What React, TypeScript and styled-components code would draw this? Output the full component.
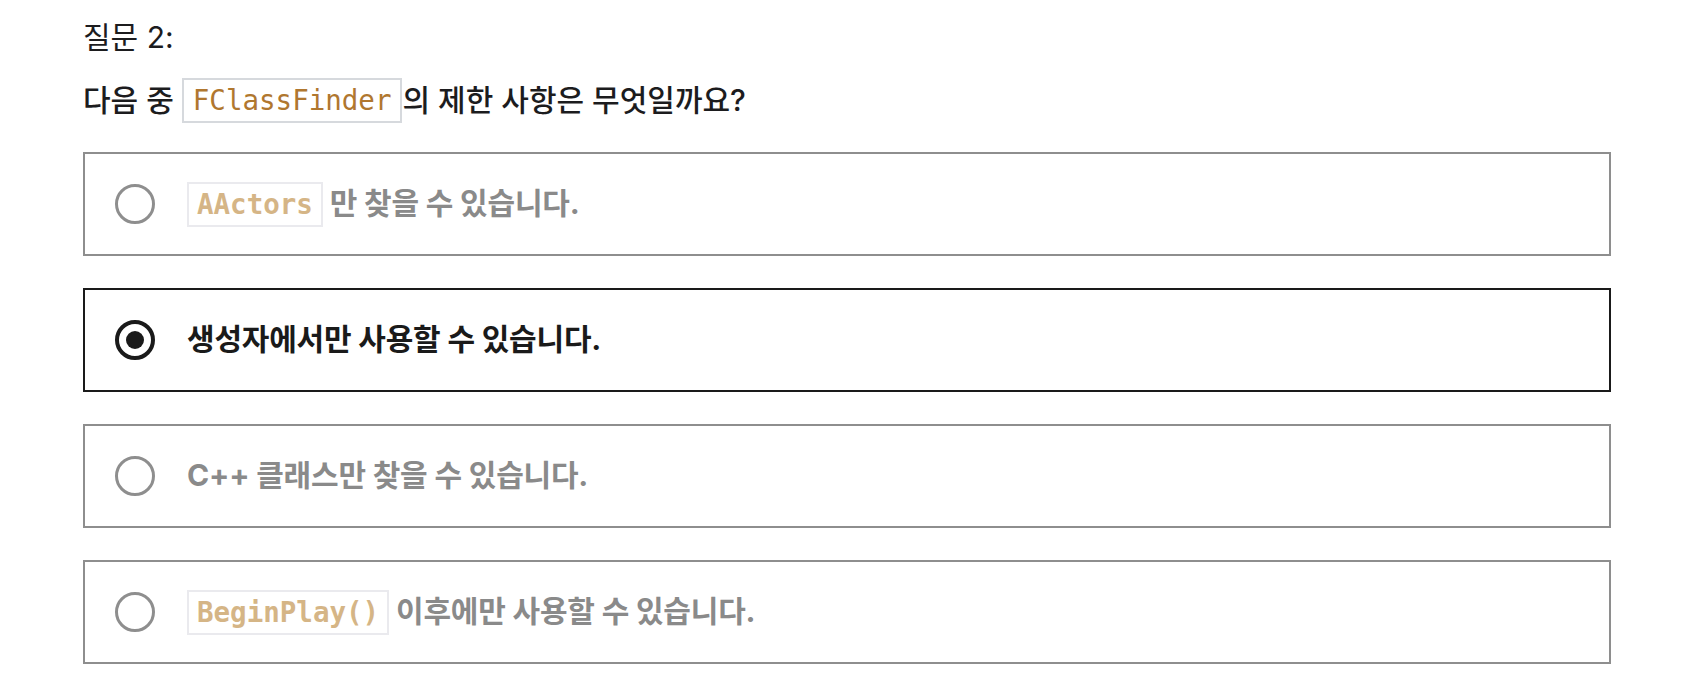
import React from "react";
import styled, { createGlobalStyle } from "styled-components";

const GlobalStyle = createGlobalStyle`
  body {
    margin: 0;
    background: #ffffff;
    font-family: Inter, "Noto Sans CJK KR", sans-serif;
    color: #1c1c1e;
  }
`;

type Part = { code?: string; text: string };

const options: { id: string; parts: Part[] }[] = [
  { id: "a", parts: [{ code: "AActors", text: " 만 찾을 수 있습니다." }] },
  { id: "b", parts: [{ text: "생성자에서만 사용할 수 있습니다." }] },
  { id: "c", parts: [{ text: "C++ 클래스만 찾을 수 있습니다." }] },
  { id: "d", parts: [{ code: "BeginPlay()", text: " 이후에만 사용할 수 있습니다." }] },
];

const QuizApp = () => {
  const [selected, setSelected] = React.useState<string>("b");

  return (
    <Page>
      <GlobalStyle />
      <Title>질문 2:</Title>
      <Question>
        <Label $lift={4}>다음 중 </Label>
        <Code>FClassFinder</Code>
        <Label $lift={4}>의 제한 사항은 무엇일까요?</Label>
      </Question>
      <OptionList>
        {options.map((item) => {
          const active = selected === item.id;
          return (
            <Option
              key={item.id}
              $active={active}
              onClick={() => setSelected(item.id)}
            >
              <Radio $active={active} />
              <OptionText $active={active}>
                {item.parts.map((part, index) => (
                  <React.Fragment key={index}>
                    {part.code ? <OptionCode>{part.code}</OptionCode> : null}
                    <Label $lift={7}>{part.text}</Label>
                  </React.Fragment>
                ))}
              </OptionText>
            </Option>
          );
        })}
      </OptionList>
    </Page>
  );
};

const Page = styled.div`
  width: 1528px;
  padding: 16px 0 0 83px;
`;

const Title = styled.div`
  font-size: 30px;
  line-height: 42px;
  font-weight: 400;
`;

const Question = styled.div`
  margin-top: 19px;
  height: 46px;
  display: flex;
  align-items: center;
  font-size: 30px;
  font-weight: 500;
  white-space: pre;
`;

// Noto CJK sits low in its line box; padding below nudges the glyphs up
const Label = styled.span<{ $lift: number }>`
  padding-bottom: ${(p) => p.$lift}px;
`;

const Code = styled.code`
  display: inline-flex;
  align-items: center;
  height: 45px;
  box-sizing: border-box;
  padding: 0 9px;
  border: 2px solid #d6d9dd;
  font-family: "DejaVu Sans Mono", monospace;
  font-size: 27.5px;
  color: #b0772f;
`;

const OptionList = styled.div`
  margin-top: 29px;
  display: flex;
  flex-direction: column;
  gap: 32px;
`;

const Option = styled.div<{ $active: boolean }>`
  display: flex;
  align-items: center;
  gap: 32px;
  height: 104px;
  box-sizing: border-box;
  padding: 0 30px;
  border: 2px solid ${(p) => (p.$active ? "#1a1a1a" : "#8e8e8e")};
  cursor: pointer;
`;

const Radio = styled.span<{ $active: boolean }>`
  flex: none;
  width: 40px;
  height: 40px;
  box-sizing: border-box;
  border-radius: 50%;
  border: ${(p) => (p.$active ? "4px solid #1a1a1a" : "3px solid #8e8e8e")};
  display: flex;
  align-items: center;
  justify-content: center;

  &::after {
    content: "";
    display: ${(p) => (p.$active ? "block" : "none")};
    width: 18px;
    height: 18px;
    border-radius: 50%;
    background: #1a1a1a;
  }
`;

const OptionText = styled.div<{ $active: boolean }>`
  display: flex;
  align-items: center;
  white-space: pre;
  font-size: 30px;
  font-weight: 700;
  letter-spacing: -0.2px;
  color: ${(p) => (p.$active ? "#1a1a1a" : "#8a8a8a")};
`;

const OptionCode = styled(Code)`
  padding: 0 8px;
  font-weight: 700;
  letter-spacing: 0;
  color: #d5b586;
  border-color: #eaeaee;
`;

export default QuizApp;
